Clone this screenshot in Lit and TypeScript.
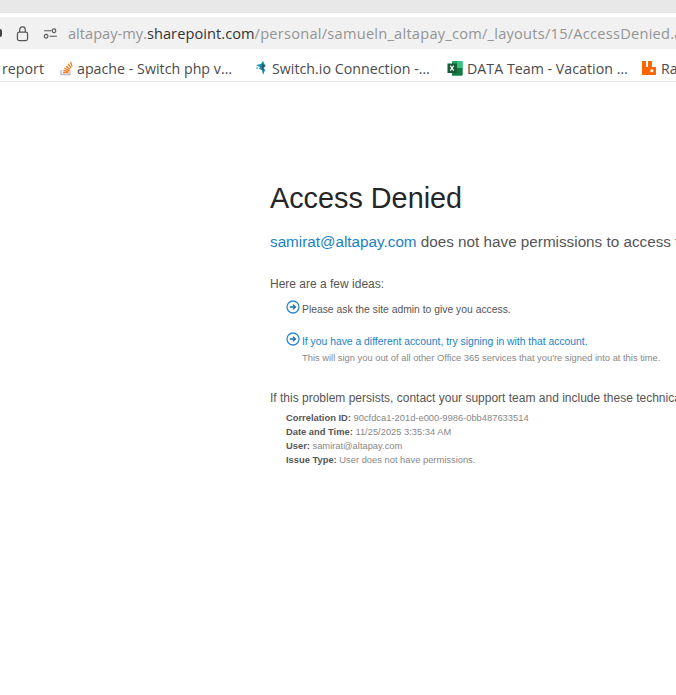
import { LitElement, html, css } from "lit";
import { customElement } from "lit/decorators.js";

const arrow = html`<svg class="arrow" viewBox="0 0 14 14" aria-hidden="true"><circle cx="7" cy="7" r="6" fill="#fff" stroke="#2b88d8" stroke-width="1.3"/><path d="M3.800 7h5.600M7 4.600 9.500 7 7 9.400" fill="none" stroke="#1f6fb5" stroke-width="1.3"/></svg>`;

@customElement("app-root")
class AppRoot extends LitElement {
  static styles = css`
    :host { display: block; width: 676px; height: 695px; overflow: hidden; background: #fff; font-family: "Liberation Sans", Arial, sans-serif; }
    .strip { height: 13px; background: #e8e8e8; }
    .gap { height: 4px; background: #fff; }
    .urlbar { height: 32px; background: #f1f1f1; display: flex; align-items: center; white-space: nowrap; overflow: hidden; font-family: "Open Sans", sans-serif; font-size: 14.6px; color: #949494; }
    .edge { width: 2px; height: 8px; background: #444; border-radius: 0 3px 3px 0; flex: none; }
    .lock { width: 15px; height: 17px; margin-left: 13px; flex: none; }
    .tune { width: 15px; height: 11px; margin-left: 13px; flex: none; }
    .url { margin-left: 10px; }
    .sub { letter-spacing: 0.01px; }
    .url b { font-weight: 400; color: #333; letter-spacing: 0.06px; }
    .path { letter-spacing: 0.25px; }
    .bookmarks { box-sizing: border-box; height: 33px; padding: 6px 0 0 2px; border-bottom: 1px solid #e4e4e4; display: flex; align-items: center; white-space: nowrap; overflow: hidden; font-family: "Open Sans", sans-serif; font-size: 14.2px; color: #4a4a4a; letter-spacing: 0.03px; }
    .bm { display: flex; align-items: center; gap: 3px; flex: none; }
    .bm svg { width: 16px; height: 16px; flex: none; }
    .b1 { width: 56px; }
    .b2 { width: 196px; }
    .b3 { width: 193px; gap: 2px; }
    .b4 { width: 194px; gap: 4px; }
    .b5 { gap: 4px; }
    main { padding: 98px 0 0 270px; white-space: nowrap; color: #555; width: 700px; }
    h1 { margin: 0; font-size: 28.8px; line-height: 36px; font-weight: 400; color: #262626; }
    .lead { margin: 17px 0 0; font-size: 15.25px; line-height: 18px; }
    a { color: #1a7fc7; text-decoration: none; }
    .ideas { margin: 25px 0 0; font-size: 12px; line-height: 16px; }
    .item { display: flex; margin: 11px 0 0 16px; font-size: 10.35px; line-height: 14px; gap: 2px; }
    .item + .item { margin-top: 18px; }
    .arrow { width: 14px; height: 14px; flex: none; margin-top: -3px; }
    .note { color: #888; font-size: 9.36px; line-height: 14px; margin-top: 2px; }
    .persist { margin: 25px 0 0; font-size: 12px; line-height: 16px; }
    .details { margin: 5px 0 0 16px; font-size: 9.36px; line-height: 14px; color: #888; }
    .details b { color: #555; }
  `;
  render() {
    return html`
      <div class="strip"></div>
      <div class="gap"></div>
      <div class="urlbar">
        <span class="edge"></span>
        <svg class="lock" viewBox="0 0 16 18" fill="none" stroke="#555" stroke-width="1.3"><rect x="2.600" y="7.600" width="10.800" height="9" rx="2"/><path d="M5 7.500V5a3 3 0 0 1 6 0v2.500"/></svg>
        <svg class="tune" viewBox="0 0 16 12" fill="none" stroke="#555" stroke-width="1.2"><circle cx="11.800" cy="3" r="2"/><path d="M1 3h8M7 9h8"/><circle cx="3.200" cy="9" r="2"/></svg>
        <span class="url"><span class="sub">altapay-my.</span><b>sharepoint.com</b><span class="path">/personal/samueln_altapay_com/_layouts/15/AccessDenied.aspx</span></span>
      </div>
      <div class="bookmarks">
        <span class="bm b1">report</span>
        <span class="bm b2">
          <svg viewBox="0 0 16 16" fill="none"><path d="M3 10v4.500h9V10" stroke="#bcbbbb" stroke-width="1.300"/><path d="M5 12.700h5.500M5.300 10.500l5.300 1M6.300 8.200l5 2.300M8 6l4 3.500M10.200 3.800l3 4.400M12.500 1.800l1.600 4.800" stroke="#f48024" stroke-width="1.300"/></svg>
          apache - Switch php v…
        </span>
        <span class="bm b3">
          <svg viewBox="0 0 16 16"><path d="M2 5l5-1 2-3 2 4-2 2 2 3-2 5-1-5-3-1 1-2z" fill="#0f8fa8"/><path d="M8 4l4 2-3 2 2 3-3-2z" fill="#1f5666"/><circle cx="3" cy="8" r="1" fill="#67c5d8"/></svg>
          Switch.io Connection -…
        </span>
        <span class="bm b4">
          <svg viewBox="0 0 16 16"><rect x="5" y="1" width="10.500" height="14.500" rx="1" fill="#21a366"/><rect x="10" y="1" width="5.500" height="7" fill="#33c481"/><rect x="5" y="8" width="10.500" height="7.500" fill="#107c41"/><rect x="0.500" y="3.500" width="9.500" height="9.500" fill="#185c37"/><path d="M3.300 5.700l3.400 5M6.700 5.700l-3.400 5" stroke="#fff" stroke-width="1.200"/></svg>
          DATA Team - Vacation …
        </span>
        <span class="bm b5">
          <svg viewBox="0 0 16 16"><path d="M1 1h4v6h2V1h4v6h4v8H1z" fill="#f60"/><rect x="9.500" y="9.500" width="2.700" height="2.700" fill="#fff"/></svg>
          Ra
        </span>
      </div>
      <main>
        <h1>Access Denied</h1>
        <p class="lead"><a>samirat@altapay.com</a> does not have permissions to access this resource.</p>
        <p class="ideas">Here are a few ideas:</p>
        <div class="item">${arrow}<div>Please ask the site admin to give you access.</div></div>
        <div class="item">${arrow}<div><a>If you have a different account, try signing in with that account.</a><div class="note">This will sign you out of all other Office 365 services that you're signed into at this time.</div></div></div>
        <p class="persist">If this problem persists, contact your support team and include these technical details:</p>
        <div class="details">
          <div><b>Correlation ID:</b> 90cfdca1-201d-e000-9986-0bb487633514</div>
          <div><b>Date and Time:</b> 11/25/2025 3:35:34 AM</div>
          <div><b>User:</b> samirat@altapay.com</div>
          <div><b>Issue Type:</b> User does not have permissions.</div>
        </div>
      </main>
    `;
  }
}
